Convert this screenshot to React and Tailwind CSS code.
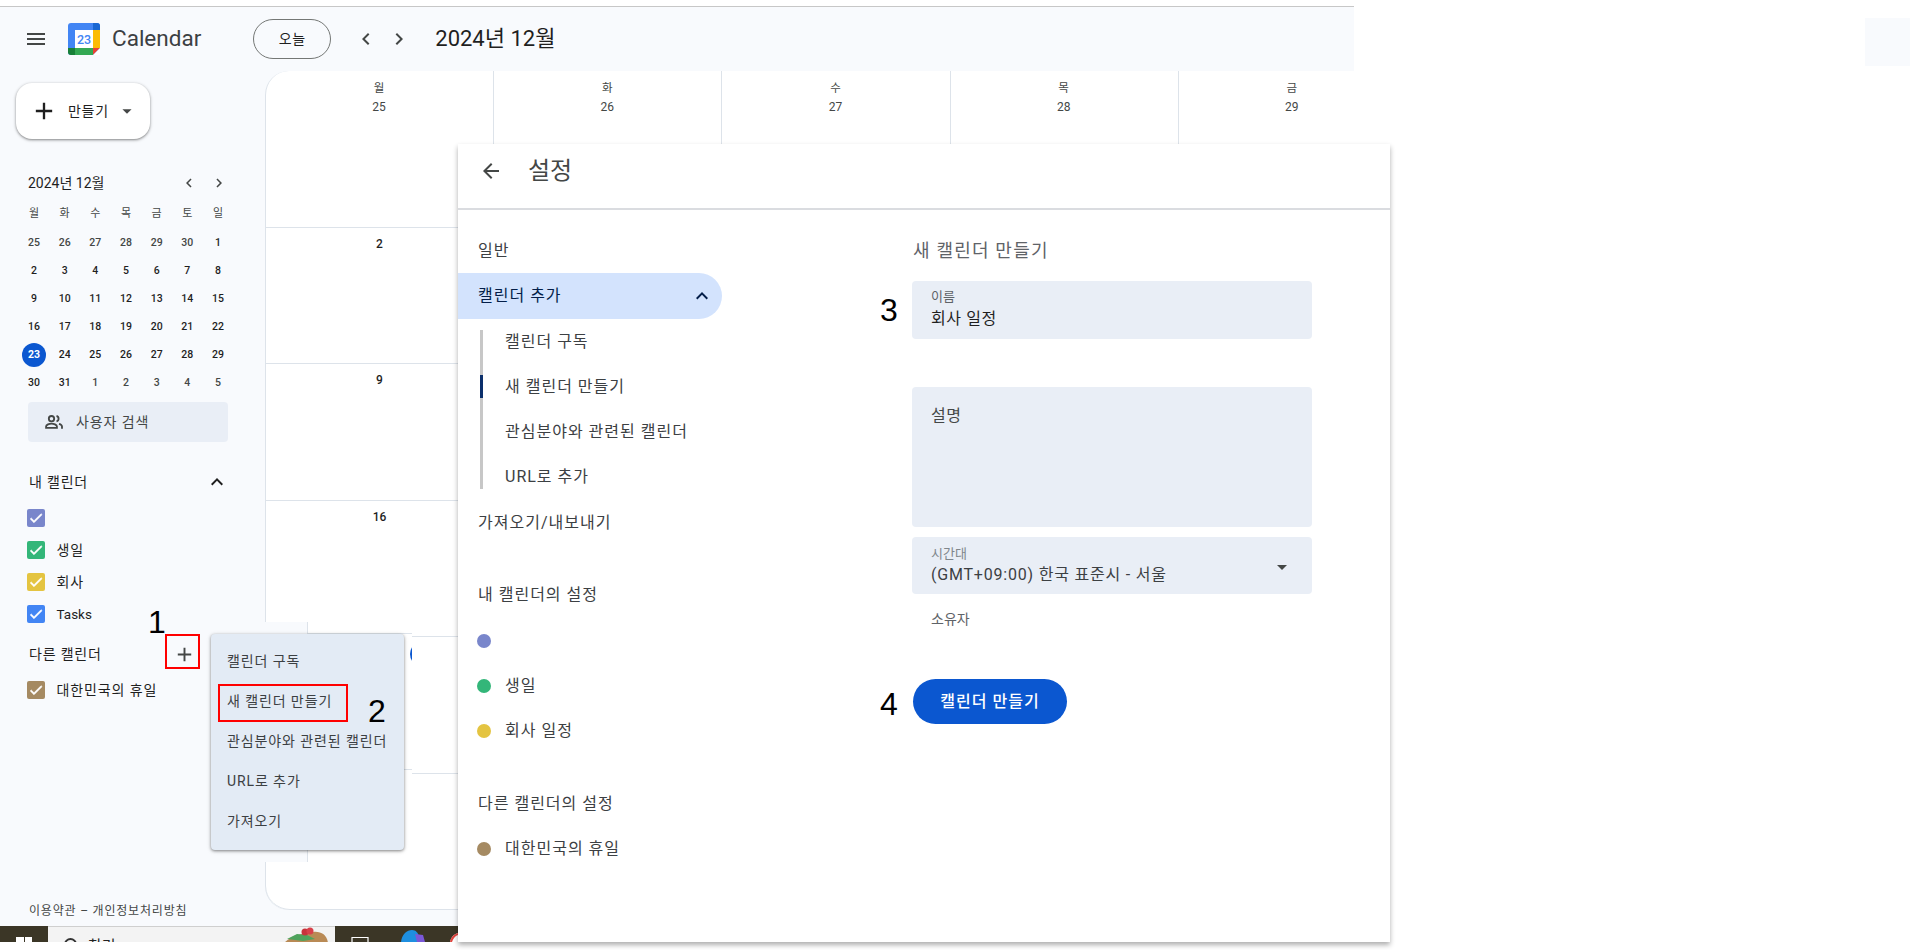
import React from "react";

const P = {
  menu: "M3 18h18v-2H3v2zm0-5h18v-2H3v2zm0-7v2h18V6H3z",
  left: "M15.41 7.41 14 6l-6 6 6 6 1.41-1.41L10.83 12z",
  right: "M10 6 8.59 7.41 13.17 12l-4.58 4.59L10 18l6-6z",
  up: "M12 8l-6 6 1.41 1.41L12 10.83l4.59 4.58L18 14z",
  back: "M20 11H7.83l5.59-5.59L12 4l-8 8 8 8 1.41-1.41L7.83 13H20v-2z",
  add: "M19 13h-6v6h-2v-6H5v-2h6V5h2v6h6v2z",
  drop: "M7 10l5 5 5-5z",
  check: "M9 16.17 4.83 12l-1.42 1.41L9 19 21 7l-1.41-1.41z",
};

function I({ d, className = "" }) {
  return (
    <svg viewBox="0 0 24 24" fill="currentColor" className={"shrink-0 " + className}>
      <path d={d} />
    </svg>
  );
}

function PeopleIcon({ className = "" }) {
  return (
    <svg viewBox="0 0 24 24" fill="none" stroke="currentColor" strokeWidth="2.2" className={"shrink-0 " + className}>
      <circle cx="9" cy="8" r="3.2" />
      <path d="M2.5 19v-1.6c0-2.2 3.9-3.5 6.5-3.5s6.5 1.3 6.5 3.5V19z" />
      <path d="M15 4.8a3.3 3.3 0 0 1 0 6.4" />
      <path d="M18 14.2c2.1.6 3.6 1.7 3.6 3.3V20" />
    </svg>
  );
}

function Logo() {
  return (
    <svg viewBox="0 0 32 32" className="w-8 h-8 shrink-0">
      <rect width="32" height="32" rx="3" fill="#4285f4" />
      <rect x="7" y="7" width="18" height="18" fill="#fff" />
      <path d="M25 0h4a3 3 0 0 1 3 3v4h-7z" fill="#1967d2" />
      <rect x="25" y="7" width="7" height="18" fill="#fbbc04" />
      <rect x="7" y="25" width="18" height="7" fill="#34a853" />
      <path d="M0 25h7v7H3a3 3 0 0 1-3-3z" fill="#188038" />
      <path d="M25 25h7l-7 7z" fill="#ea4335" />
      <path d="M32 25v7h-7z" fill="#fff" />
      <text x="16" y="20.5" textAnchor="middle" fontSize="12.5" fontWeight="500" fill="#4285f4" fontFamily="Roboto">23</text>
    </svg>
  );
}

const weeks = [
  [["25", 1], ["26", 1], ["27", 1], ["28", 1], ["29", 1], ["30", 1], ["1", 0]],
  [["2"], ["3"], ["4"], ["5"], ["6"], ["7"], ["8"]],
  [["9"], ["10"], ["11"], ["12"], ["13"], ["14"], ["15"]],
  [["16"], ["17"], ["18"], ["19"], ["20"], ["21"], ["22"]],
  [["23", 2], ["24"], ["25"], ["26"], ["27"], ["28"], ["29"]],
  [["30"], ["31"], ["1", 1], ["2", 1], ["3", 1], ["4", 1], ["5", 1]],
];

function MiniCal() {
  return (
    <div className="ml-[18.67px] mt-[3px] w-[214.67px] grid grid-cols-7 text-[10.5px] font-medium text-[#1f1f1f] text-center">
      {["월", "화", "수", "목", "금", "토", "일"].map((d) => (
        <div key={d} className="h-[29px] flex items-center justify-center font-normal text-[11px] text-[#444746]">{d}</div>
      ))}
      {weeks.flat().map(([n, k], i) => (
        <div key={i} className={"h-[28px] flex items-center justify-center " + (k === 1 ? "text-[#444746]" : "")}>
          {k === 2 ? (
            <span className="w-6 h-6 rounded-full bg-[#0b57d0] text-white font-bold flex items-center justify-center">{n}</span>
          ) : (
            n
          )}
        </div>
      ))}
    </div>
  );
}

function Check({ color, label }) {
  return (
    <div className="h-8 flex items-center pl-[27px] gap-[11.5px] text-[14px] tracking-[0.9px] text-[#1f1f1f]">
      <span className={"w-[18px] h-[18px] rounded-[2px] flex items-center justify-center text-white " + color}>
        <svg viewBox="0 0 24 24" fill="currentColor" stroke="currentColor" strokeWidth="1" className="w-4 h-4 shrink-0">
          <path d={P.check} />
        </svg>
      </span>
      {label}
    </div>
  );
}

function Sidebar() {
  return (
    <aside className="w-[265px] shrink-0 flex flex-col">
      <button className="mt-3 ml-4 w-[134px] h-14 rounded-2xl bg-white shadow-[0_1px_3px_1px_rgba(0,0,0,0.15),0_1px_2px_rgba(0,0,0,0.3)] flex items-center pl-[14px] text-[14px] tracking-[0.7px] text-[#1f1f1f]">
        <I d={P.add} className="w-7 h-7" />
        <span className="ml-[10px]">만들기</span>
        <I d={P.drop} className="w-[22px] h-[22px] ml-[7px] text-[#444746]" />
      </button>
      <div className="mt-[30px] h-7 pl-7 pr-[37px] flex items-center justify-between text-[14px] text-[#1f1f1f]">
        <span>2024년 12월</span>
        <span className="flex items-center gap-3 text-[#444746]">
          <I d={P.left} className="w-[18px] h-[18px]" />
          <I d={P.right} className="w-[18px] h-[18px]" />
        </span>
      </div>
      <MiniCal />
      <div className="mt-[5px] ml-7 w-[200px] h-10 rounded bg-[#e9eef6] flex items-center pl-[16px] gap-[12px] text-[14px] tracking-[0.9px] text-[#444746]">
        <PeopleIcon className="w-[20px] h-[20px]" />
        사용자 검색
      </div>
      <div className="mt-7 h-6 pl-[29px] pr-[36px] flex items-center justify-between text-[14px] tracking-[0.8px] text-[#1f1f1f]">
        내 캘린더
        <I d={P.up} className="w-6 h-6" />
      </div>
      <div className="mt-2 flex flex-col">
        <Check color="bg-[#7986cb]" label="" />
        <Check color="bg-[#33b679]" label="생일" />
        <Check color="bg-[#e4c441]" label="회사" />
        <Check color="bg-[#4285f4]" label={<span className="tracking-normal text-[13.5px]">Tasks</span>} />
      </div>
      <div className="mt-2 h-8 pl-[29px] flex items-center justify-between pr-[69px] text-[14px] tracking-[0.8px] text-[#1f1f1f]">
        다른 캘린더
        <I d={P.add} className="w-[23px] h-[23px] text-[#444746]" />
      </div>
      <div className="mt-1">
        <Check color="bg-[#a58a62]" label="대한민국의 휴일" />
      </div>
      <div className="mt-auto mb-[7px] h-4 pl-[29px] flex items-center text-[12px] tracking-[0.8px] text-[#444746]">이용약관 – 개인정보처리방침</div>
    </aside>
  );
}

function CalGrid() {
  const heads = [["월", "25"], ["화", "26"], ["수", "27"], ["목", "28"], ["금", "29"]];
  const rows = ["2", "9", "16", "23", "30"];
  return (
    <main className="flex-1 min-w-0 overflow-hidden">
      <div className="w-[1141px] bg-white rounded-l-[24px] border-l border-[#dde3ea]">
        <div className="flex h-[157px] border-b border-[#dde3ea]">
          {heads.map(([d, n]) => (
            <div key={n} className="w-[228.2px] shrink-0 border-r border-[#dde3ea] pt-[8px] pr-[1px] flex flex-col items-center text-[#444746]">
              <span className="h-[19px] leading-[19px] text-[11.5px]">{d}</span>
              <span className="h-[19px] leading-[19px] text-[12px]">{n}</span>
            </div>
          ))}
        </div>
        {rows.map((r, i) => (
          <div key={r} className={"flex h-[136.4px] border-b border-[#dde3ea] " + (i === 4 ? "rounded-bl-[24px]" : "")}>
            <div className="w-[227px] shrink-0 pt-[7px] text-center text-[12px] font-medium text-[#1f1f1f]">{r}</div>
          </div>
        ))}
      </div>
    </main>
  );
}

function Taskbar() {
  return (
    <div className="h-4 w-[458px] bg-[#3b3626] flex overflow-hidden">
      <div className="w-12 shrink-0 pt-[11px] pl-4">
        <div className="grid grid-cols-2 gap-[1px] w-4">
          <span className="h-4 bg-white" />
          <span className="h-4 bg-white" />
        </div>
      </div>
      <div className="w-[287px] shrink-0 bg-[#f3f3f3] border-t border-[#cfcfcf] flex pl-4 relative">
        <span className="mt-[11px] w-[13px] h-[13px] rounded-full border-2 border-[#333]" />
        <span className="ml-[11px] mt-[9px] text-[15px] leading-[20px] text-[#222]">찾기</span>
        <svg viewBox="0 0 46 16" className="absolute left-[235px] top-0 w-[46px] h-4">
          <path d="M1 16 C8 9 20 6 30 5 C38 4 44 8 45 16Z" fill="#b98a55" />
          <path d="M4 12 L14 7 L24 8 L32 12 L20 14Z" fill="#4fa35c" />
          <circle cx="22" cy="5" r="3.5" fill="#c8323c" />
          <circle cx="27" cy="4" r="3.5" fill="#d8404a" />
        </svg>
      </div>
      <div className="flex-1 relative">
        <svg viewBox="0 0 123 16" className="w-[123px] h-4">
          <path d="M17 11v5M17 11.5h16M33 11v5" stroke="#fff" strokeWidth="1.2" fill="none" />
          <path d="M66 16c1-8 6-12 11-12 4 0 6 3 7 6l3 6z" fill="#1e8fe0" />
          <path d="M80 8l8 1 2 7h-8z" fill="#7a58d8" />
          <path d="M115 16c1-5 4-8 8-9v9z" fill="#fff" />
          <path d="M115 16c1-5 4-8 8-9v2c-3 1-5 4-6 7z" fill="#e0443e" />
        </svg>
      </div>
    </div>
  );
}

function NavRow({ children, dot, className = "" }) {
  return (
    <div className={"flex items-center pl-5 text-[16px] tracking-[1px] text-[#3c4043] " + className}>
      {dot && <span className={"w-[14px] h-[14px] rounded-full -ml-[1px] mr-[14px] " + dot} />}
      {children}
    </div>
  );
}

function SettingsPanel() {
  return (
    <section className="absolute left-[458px] top-[144px] w-[932px] h-[798px] bg-white shadow-[0_3px_5px_rgba(0,0,0,0.32)] flex flex-col text-[#3c4043]">
      <header className="h-[66px] shrink-0 border-b-2 border-[#dadce0] flex items-center pl-[21px] pb-[10px]">
        <I d={P.back} className="w-6 h-6 text-[#444746]" />
        <h1 className="ml-[25px] text-[24px] font-normal text-[#444746]">설정</h1>
      </header>
      <div className="flex">
        <nav className="w-[264px] shrink-0 pt-[17px] flex flex-col">
          <NavRow className="h-[46px] pt-[2px]">일반</NavRow>
          <div className="h-[46px] w-[264px] rounded-r-full bg-[#d3e3fd] flex items-center justify-between pl-5 pr-2 text-[16px] tracking-[1px] text-[#041e49]">
            캘린더 추가
            <I d={P.up} className="w-6 h-6" />
          </div>
          <div className="mt-[11px] ml-[22px] pl-[22px] border-l-[3px] border-[#c7c7c7] flex flex-col gap-[22.3px] relative text-[16px] tracking-[1px]">
            <span className="absolute -left-[3px] top-[45px] w-[3px] h-[23px] bg-[#0b2f6b]" />
            <div className="h-[23px] flex items-center">캘린더 구독</div>
            <div className="h-[23px] flex items-center">새 캘린더 만들기</div>
            <div className="h-[23px] flex items-center">관심분야와 관련된 캘린더</div>
            <div className="h-[23px] flex items-center">URL로 추가</div>
          </div>
          <NavRow className="mt-[10px] h-[46px] pt-[2px]">가져오기/내보내기</NavRow>
          <NavRow className="mt-[26px] h-[46px] pt-[2px]">내 캘린더의 설정</NavRow>
          <NavRow className="mt-[1.5px] h-[45px]" dot="bg-[#7986cb]"> </NavRow>
          <NavRow className="h-[45px]" dot="bg-[#33b679]">생일</NavRow>
          <NavRow className="h-[45px]" dot="bg-[#e4c441]">회사 일정</NavRow>
          <NavRow className="mt-[26.5px] h-[46px] pt-[2px]">다른 캘린더의 설정</NavRow>
          <NavRow className="h-[46px]" dot="bg-[#a58a62]">대한민국의 휴일</NavRow>
        </nav>
        <div className="ml-[190px] w-[400px] pt-7 flex flex-col">
          <h2 className="h-6 ml-[1px] flex items-center text-[18px] tracking-[1.2px] font-normal text-[#5f6368]">새 캘린더 만들기</h2>
          <div className="mt-[19px] h-[58px] rounded bg-[#e9eef6] pl-[19px] pt-[7px] flex flex-col">
            <span className="h-[17px] leading-[17px] text-[13px] text-[#5f6368]">이름</span>
            <span className="mt-[2px] h-[24px] leading-[24px] text-[16px] tracking-[0.6px] text-[#1f1f1f]">회사 일정</span>
          </div>
          <div className="mt-[48px] h-[140px] rounded bg-[#e9eef6] pl-[19px] pt-[18px] text-[16px] tracking-[0.6px] leading-[22px] text-[#444746]">설명</div>
          <div className="mt-[9.5px] h-[57.5px] rounded bg-[#e9eef6] pl-[19px] pr-[18px] pt-[7px] flex items-center justify-between relative">
            <div className="flex flex-col self-start">
              <span className="h-[19px] leading-[19px] text-[13px] text-[#80868b]">시간대</span>
              <span className="h-[24px] leading-[24px] text-[16px] tracking-[0.8px] text-[#3c4043]">(GMT+09:00) 한국 표준시 - 서울</span>
            </div>
            <I d={P.drop} className="w-6 h-6 text-[#444746] -mt-[4px]" />
          </div>
          <div className="mt-[15px] h-5 pl-[19px] flex items-center text-[14px] text-[#5f6368]">소유자</div>
          <button className="mt-[50px] ml-[1px] w-[154px] h-[45px] rounded-full bg-[#0b57d0] text-white text-[16px] tracking-[1px] font-medium">캘린더 만들기</button>
        </div>
      </div>
    </section>
  );
}

function PasteBehindMenu() {
  return (
    <div className="absolute left-[265px] top-[622px] w-[147px] h-[240px] flex overflow-hidden">
      <div className="w-[42px] h-full bg-[#f8fafd]" />
      <div className="flex-1 bg-white border-l border-[#dde3ea] relative">
        <div className="mt-[11px] h-[137px] border-y border-[#dde3ea]" />
        <span className="absolute right-[-22px] top-[20px] w-6 h-6 rounded-full bg-[#0b57d0]" />
      </div>
    </div>
  );
}

function AddMenu() {
  const items = ["캘린더 구독", "새 캘린더 만들기", "관심분야와 관련된 캘린더", "URL로 추가", "가져오기"];
  return (
    <div className="absolute left-[211px] top-[634px] w-[193px] h-[216px] rounded bg-[#e3ebf5] shadow-[0_1px_3px_rgba(0,0,0,0.4),0_1px_5px_rgba(0,0,0,0.15)] pt-[7px] pl-[16px] text-[14px] tracking-[0.9px] text-[#3c4043]">
      {items.map((t) => (
        <div key={t} className="h-10 flex items-center whitespace-nowrap">{t}</div>
      ))}
    </div>
  );
}

function Num({ n, className }) {
  return (
    <span className={"absolute text-[32px] leading-[32px] text-black font-['Liberation_Sans',sans-serif] " + className}>{n}</span>
  );
}

export default function App() {
  return (
    <div className="relative w-[1910px] h-[950px] bg-white overflow-hidden font-['Roboto','Noto_Sans_CJK_KR',sans-serif]">
      <div className="pt-[6px] w-[1354px]">
        <div className="h-[920px] border-t border-[#c7c7c7] bg-[#f8fafd] flex flex-col">
          <header className="h-16 shrink-0 flex items-center text-[#1f1f1f]">
            <I d={P.menu} className="ml-[24px] w-6 h-6 text-[#444746]" />
            <div className="ml-[20px]"><Logo /></div>
            <span className="ml-3 text-[22.5px] text-[#3c4043]">Calendar</span>
            <button className="ml-[52px] w-[78px] h-10 rounded-full border border-[#747775] text-[14px] tracking-[0.6px]">오늘</button>
            <I d={P.left} className="ml-[23px] w-6 h-6 text-[#444746]" />
            <I d={P.right} className="ml-[9px] w-6 h-6 text-[#444746]" />
            <span className="ml-[24px] -mt-[2px] text-[22px]">2024년 12월</span>
          </header>
          <div className="flex flex-1 min-h-0">
            <Sidebar />
            <CalGrid />
          </div>
        </div>
        <Taskbar />
      </div>

      <div className="absolute left-[1865px] top-[18px] w-[45px] h-[48px] bg-[#f8fafd]" />

      <SettingsPanel />
      <PasteBehindMenu />
      <AddMenu />

      <div className="absolute left-[165px] top-[634px] w-[35px] h-[35px] border-2 border-[#f00]" />
      <div className="absolute left-[218px] top-[684px] w-[130px] h-[38px] border-2 border-[#f00]" />
      <Num n="1" className="left-[148px] top-[606px]" />
      <Num n="2" className="left-[368px] top-[695px]" />
      <Num n="3" className="left-[880px] top-[294px]" />
      <Num n="4" className="left-[880px] top-[688px]" />
    </div>
  );
}
